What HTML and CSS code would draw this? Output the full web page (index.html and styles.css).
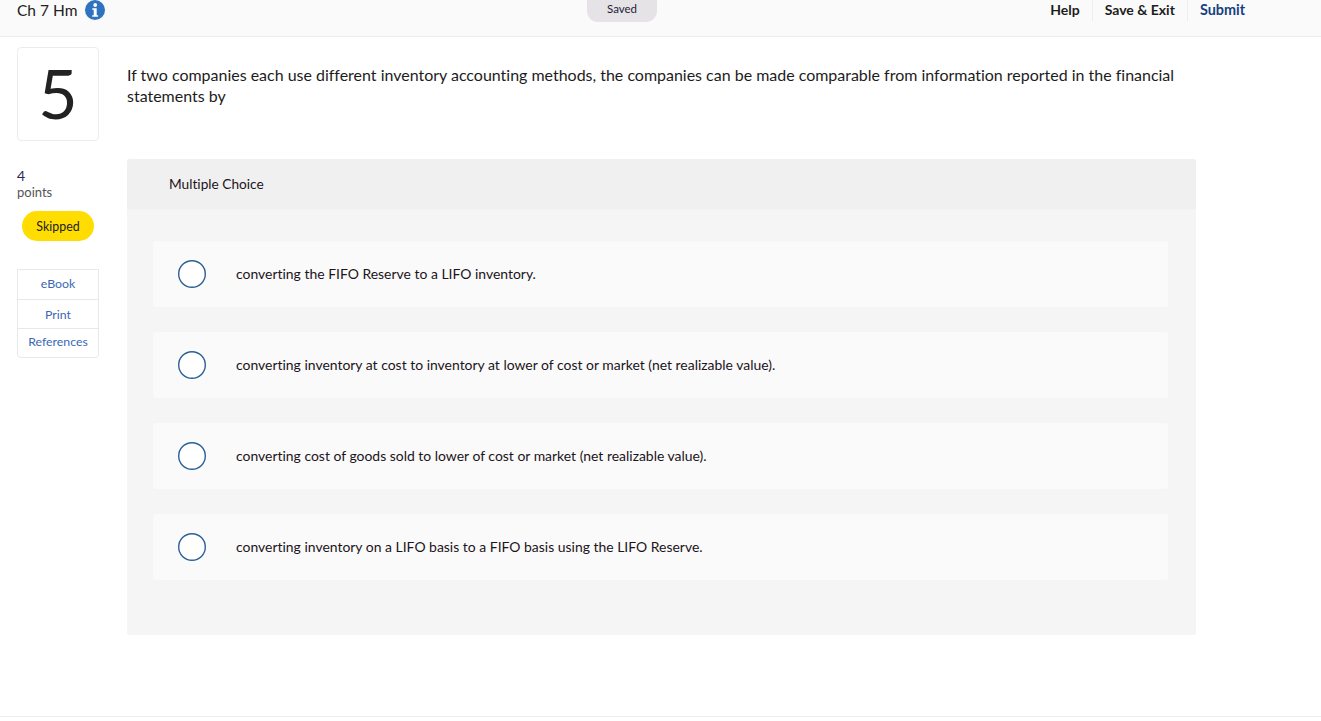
FILE: index.html
```html
<!DOCTYPE html>
<html lang="en">
<head>
<meta charset="utf-8">
<title>Ch 7 Hm</title>
<link rel="stylesheet" href="styles.css">
</head>
<body>
<header class="topbar">
  <div class="title-group">
    <span class="title">Ch 7 Hm</span>
    <svg class="info" viewBox="0 0 20 20" width="20" height="20" aria-hidden="true">
      <circle cx="10" cy="10" r="10" fill="#2f72c0"/>
      <circle cx="10.2" cy="5" r="1.9" fill="#fff"/>
      <path d="M7.3 8.2h4.4v7h1.4v1.6H7.2v-1.6h1.5V9.8H7.3z" fill="#fff"/>
    </svg>
  </div>
  <div class="saved">Saved</div>
  <nav class="actions">
    <a class="action">Help</a>
    <a class="action">Save &amp; Exit</a>
    <a class="action submit">Submit</a>
  </nav>
</header>
<main class="content">
  <aside class="side">
    <div class="qnum">5</div>
    <div class="points"><b>4</b><span>points</span></div>
    <div class="status">Skipped</div>
    <ul class="tools">
      <li class="tool-a">eBook</li>
      <li class="tool-b">Print</li>
      <li class="tool-c">References</li>
    </ul>
  </aside>
  <section class="question">
    <p class="prompt">If two companies each use different inventory accounting methods, the companies can be made comparable from information reported in the financial statements by</p>
    <div class="panel">
      <div class="panel-head">Multiple Choice</div>
      <div class="choices">
        <label class="choice"><svg class="radio" viewBox="0 0 28 28" width="28" height="28" aria-hidden="true"><circle cx="14" cy="14" r="13.3" fill="#fff" stroke="#2a6096" stroke-width="1.4"/></svg><span class="choice-text">converting the FIFO Reserve to a LIFO inventory.</span></label>
        <label class="choice"><svg class="radio" viewBox="0 0 28 28" width="28" height="28" aria-hidden="true"><circle cx="14" cy="14" r="13.3" fill="#fff" stroke="#2a6096" stroke-width="1.4"/></svg><span class="choice-text">converting inventory at cost to inventory at lower of cost or market (net realizable value).</span></label>
        <label class="choice"><svg class="radio" viewBox="0 0 28 28" width="28" height="28" aria-hidden="true"><circle cx="14" cy="14" r="13.3" fill="#fff" stroke="#2a6096" stroke-width="1.4"/></svg><span class="choice-text">converting cost of goods sold to lower of cost or market (net realizable value).</span></label>
        <label class="choice"><svg class="radio" viewBox="0 0 28 28" width="28" height="28" aria-hidden="true"><circle cx="14" cy="14" r="13.3" fill="#fff" stroke="#2a6096" stroke-width="1.4"/></svg><span class="choice-text">converting inventory on a LIFO basis to a FIFO basis using the LIFO Reserve.</span></label>
      </div>
    </div>
  </section>
</main>
<footer class="foot"></footer>
</body>
</html>
```
FILE: styles.css
```css
* { box-sizing: border-box; }
html, body { height: 100%; }
body {
  margin: 0;
  height: 721px;
  overflow: hidden;
  background: #fff;
  color: #1c1c1c;
  font-family: "Lato", "Liberation Sans", sans-serif;
  font-variant-ligatures: none;
  display: flex;
  flex-direction: column;
}
.topbar {
  flex: none;
  height: 37px;
  background: #fafafa;
  border-bottom: 1px solid #ececec;
  display: grid;
  grid-template-columns: 570px 70px 1fr;
  align-items: start;
  padding: 0 64px 0 17px;
}
.title-group { display: flex; align-items: center; gap: 8px; height: 20px; }
.title { font-size: 15.5px; color: #222; }
.info { display: block; }
.saved {
  width: 70px;
  height: 22px;
  border-radius: 0 0 11px 11px / 0 0 11px 11px;
  background: #e6e3e7;
  color: #1f1a3a;
  font-size: 11.5px;
  text-align: center;
  line-height: 18px;
}
.actions { display: flex; justify-content: flex-end; align-items: stretch; height: 21px; }
.action {
  font-size: 14px;
  font-weight: 700;
  color: #1d1d1d;
  line-height: 20px;
  padding: 0 12px;
  border-left: 1px solid #eee;
}
.action:first-child { border-left: 0; }
.submit { color: #173f7f; font-size: 14.4px; }
.content { flex: 1; display: flex; padding: 10px 0 0 17px; min-height: 0; }
.side { flex: none; width: 82px; display: flex; flex-direction: column; }
.qnum {
  height: 94px;
  border: 1px solid #ececec;
  border-radius: 4px;
  font-size: 68px;
  font-weight: 400;
  line-height: 90px;
  text-align: center;
  color: #222;
}
.points { margin-top: 27px; display: flex; flex-direction: column; font-size: 13px; color: #555; line-height: 16px; }
.points b { font-size: 14px; font-weight: 400; color: #2a2a55; line-height: 16px; }
.status {
  margin: 11px auto 0;
  width: 72px;
  height: 30px;
  border-radius: 15px;
  background: #ffdd00;
  color: #222;
  font-size: 12.4px;
  line-height: 31px;
  text-align: center;
}
.tools {
  list-style: none;
  margin: 28px 0 0;
  padding: 0;
  border: 1px solid #e8e8e8;
  border-radius: 0 0 4px 4px;
  color: #3a68b5;
  font-size: 12.3px;
  text-align: center;
}
.tools li { display: flex; align-items: center; justify-content: center; }
.tool-a { height: 30px; border-bottom: 1px solid #e8e8e8; padding-bottom: 2px; }
.tool-b { height: 29px; border-bottom: 1px solid #e8e8e8; padding-top: 1px; }
.tool-c { height: 28px; padding-bottom: 3px; }
.question { flex: none; width: 1069px; margin-left: 28px; }
.prompt {
  margin: 17px 0 0;
  width: 1060px;
  font-size: 15.98px;
  line-height: 21px;
  color: #1c1c1c;
}
.panel {
  margin-top: 53px;
  height: 476px;
  background: #f5f5f5;
  border-radius: 3px;
  overflow: hidden;
}
.panel-head {
  height: 50px;
  padding-left: 42px;
  background: #f0f0f0;
  font-size: 13.7px;
  line-height: 50px;
  color: #1c1420;
}
.choices {
  display: flex;
  flex-direction: column;
  gap: 25px;
  padding: 32px 28px 0 26px;
}
.choice {
  height: 66px;
  background: #fafafa;
  border-radius: 3px;
  display: flex;
  align-items: center;
  padding-left: 25px;
  gap: 30px;
  font-size: 13.95px;
  color: #1c1420;
}
.radio { flex: none; display: block; }
.choice-text { margin-bottom: 2px; }
.foot { flex: none; height: 5px; border-top: 1px solid #ededed; }
```
